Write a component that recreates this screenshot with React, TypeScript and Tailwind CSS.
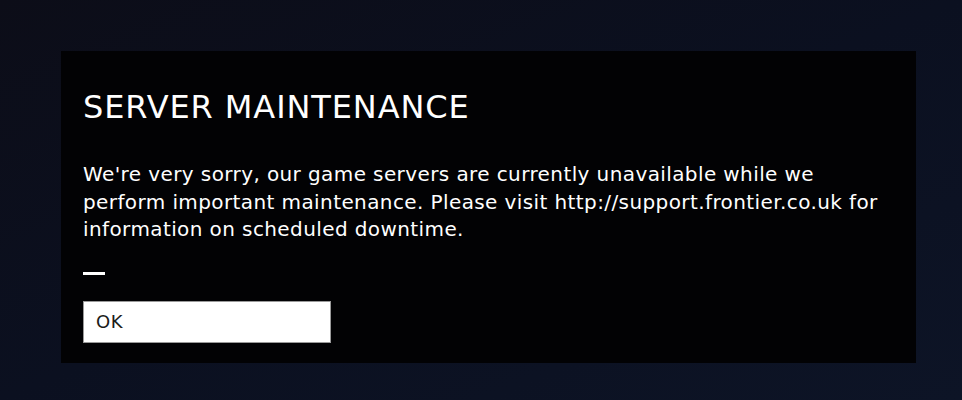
const App = () => {
    return (
        <div className="w-[962px] h-[400px] bg-[#0b0f1d] bg-gradient-to-br from-[#0c0d18] via-[#0b1020] to-[#0d1426] pt-[51px] pl-[61px]">
            <div className="w-[855px] h-[312px] bg-[#020204] pl-[22px] pt-[38px]">
                <h1
                    className="text-white text-[32px] leading-[36px] tracking-[0.9px]"
                    style={{ fontFamily: '"DejaVu Sans", sans-serif' }}
                >
                    SERVER MAINTENANCE
                </h1>
                <p
                    className="mt-[36px] text-white text-[20px] leading-[27.5px] tracking-[0.4px] w-[830px] whitespace-nowrap"
                    style={{ fontFamily: '"DejaVu Sans", sans-serif' }}
                >
                    We're very sorry, our game servers are currently unavailable while we
                    <br />
                    perform important maintenance. Please visit http://support.frontier.co.uk for
                    <br />
                    information on scheduled downtime.
                </p>
                <div className="mt-[28px] w-[22px] h-[3px] bg-white" />
                <button
                    className="mt-[26px] w-[248px] h-[42px] bg-white border border-[#9a9a9a] text-left pl-[12px] text-[#1c1c1a] text-[18px] tracking-[0.5px]"
                    style={{ fontFamily: '"DejaVu Sans", sans-serif' }}
                >
                    OK
                </button>
            </div>
        </div>
    );
}

export default App;
